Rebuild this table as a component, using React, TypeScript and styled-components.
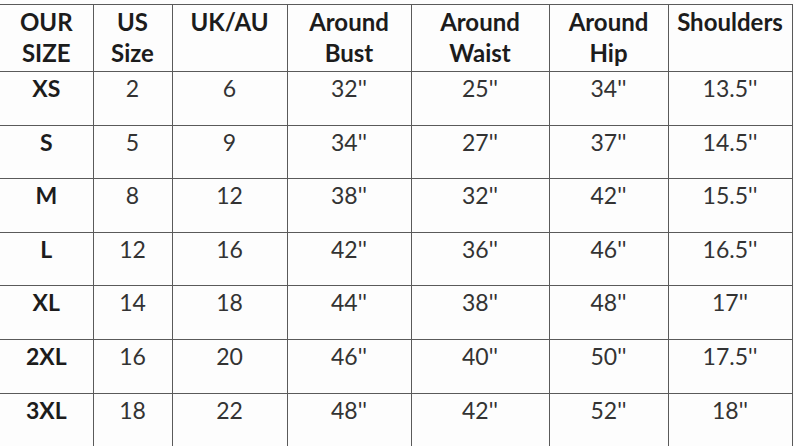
import styled, { createGlobalStyle } from "styled-components";

const GlobalStyle = createGlobalStyle`
  html, body {
    margin: 0;
    padding: 0;
    background: #fdfdfd;
  }
`;

const Page = styled.div`
  width: 794px;
  height: 446px;
  overflow: hidden;
  padding-top: 4px;
  box-sizing: border-box;
  font-family: "Lato", "Liberation Sans", sans-serif;
`;

const Table = styled.table`
  border-collapse: collapse;
  table-layout: fixed;
  width: 792px;
`;

const HeadCell = styled.th`
  height: 65px;
  padding: 1px 0 0;
  vertical-align: top;
  text-align: center;
  font-size: 24px;
  line-height: 31px;
  font-weight: 700;
  color: #1c1c1c;
  border: 1.5px solid #5a5a5a;
  &:first-child {
    border-left: none;
  }
`;

const Cell = styled.td<{ $bold?: boolean }>`
  height: 53.6px;
  padding: 1px 0 0;
  box-sizing: border-box;
  vertical-align: top;
  text-align: center;
  font-size: 23px;
  line-height: 31px;
  font-weight: ${(p) => (p.$bold ? 700 : 400)};
  color: ${(p) => (p.$bold ? "#1c1c1c" : "#333")};
  border: 1.5px solid #5a5a5a;
  &:first-child {
    border-left: none;
  }
`;

const widths = [93, 79, 115, 124, 138, 119, 124];

const headers = [
  ["OUR", "SIZE"],
  ["US", "Size"],
  ["UK/AU"],
  ["Around", "Bust"],
  ["Around", "Waist"],
  ["Around", "Hip"],
  ["Shoulders"],
];

const rows = [
  ["XS", "2", "6", "32''", "25''", "34''", "13.5''"],
  ["S", "5", "9", "34''", "27''", "37''", "14.5''"],
  ["M", "8", "12", "38''", "32''", "42''", "15.5''"],
  ["L", "12", "16", "42''", "36''", "46''", "16.5''"],
  ["XL", "14", "18", "44''", "38''", "48''", "17''"],
  ["2XL", "16", "20", "46''", "40''", "50''", "17.5''"],
  ["3XL", "18", "22", "48''", "42''", "52''", "18''"],
];

export default function App() {
  return (
    <Page>
      <GlobalStyle />
      <Table>
        <colgroup>
          {widths.map((w, i) => (
            <col key={i} style={{ width: w }} />
          ))}
        </colgroup>
        <thead>
          <tr>
            {headers.map((h, i) => (
              <HeadCell key={i}>
                {h.map((line, j) => (
                  <div key={j}>{line}</div>
                ))}
              </HeadCell>
            ))}
          </tr>
        </thead>
        <tbody>
          {rows.map((r) => (
            <tr key={r[0]}>
              {r.map((v, i) => (
                <Cell key={i} $bold={i === 0}>
                  {v}
                </Cell>
              ))}
            </tr>
          ))}
        </tbody>
      </Table>
    </Page>
  );
}
